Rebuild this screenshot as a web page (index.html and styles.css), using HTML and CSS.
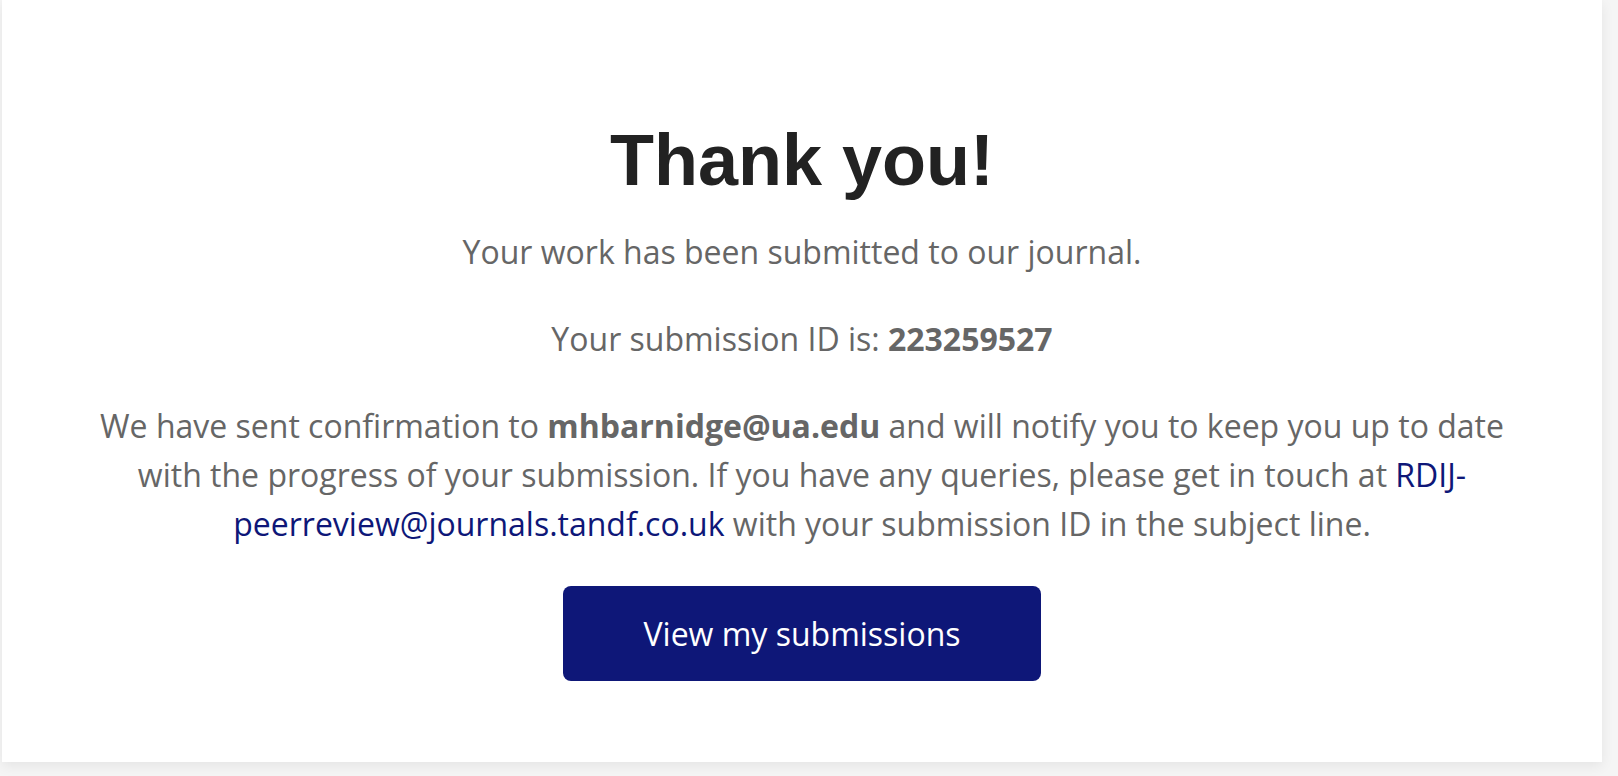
FILE: index.html
```html
<!DOCTYPE html>
<html lang="en">
<head>
<meta charset="utf-8">
<title>Thank you</title>
<link rel="stylesheet" href="styles.css">
</head>
<body>
<main class="page">
  <section class="card">
    <h1 class="title">Thank you!</h1>
    <p class="text">Your work has been submitted to our journal.</p>
    <p class="text">Your submission ID is: <strong>223259527</strong></p>
    <p class="text">We have sent confirmation to <strong>mhbarnidge@ua.edu</strong> and will notify you to keep you up to date with the progress of your submission. If you have any queries, please get in touch at <a class="link" href="#">RDIJ-peerreview@journals.tandf.co.uk</a> with your submission ID in the subject line.</p>
    <a class="button" href="#">View my submissions</a>
  </section>
</main>
</body>
</html>
```

FILE: styles.css
```css
html, body {
  margin: 0;
  padding: 0;
  background: #f5f5f5;
}

.page {
  padding: 0 16px 14px 2px;
}

.card {
  background: #ffffff;
  box-shadow: 0 4px 12px rgba(0, 0, 0, 0.07);
  padding: 124px 80px 81px;
  display: flex;
  flex-direction: column;
  align-items: center;
  text-align: center;
  font-family: "Open Sans", "Noto Sans", sans-serif;
  color: #666666;
}

.title {
  margin: 0 0 31px;
  font-family: "Liberation Sans", Arial, sans-serif;
  font-weight: 700;
  font-size: 72px;
  line-height: 72px;
  color: #222222;
}

.text {
  margin: 0 0 38px;
  font-size: 32px;
  line-height: 49px;
}

.text strong {
  font-weight: 700;
}

.link {
  color: #0e1778;
  text-decoration: none;
}

.button {
  display: block;
  padding: 23px 80px;
  font-size: 32px;
  line-height: 49px;
  color: #ffffff;
  background: #0e1778;
  border-radius: 8px;
  text-decoration: none;
}
```
